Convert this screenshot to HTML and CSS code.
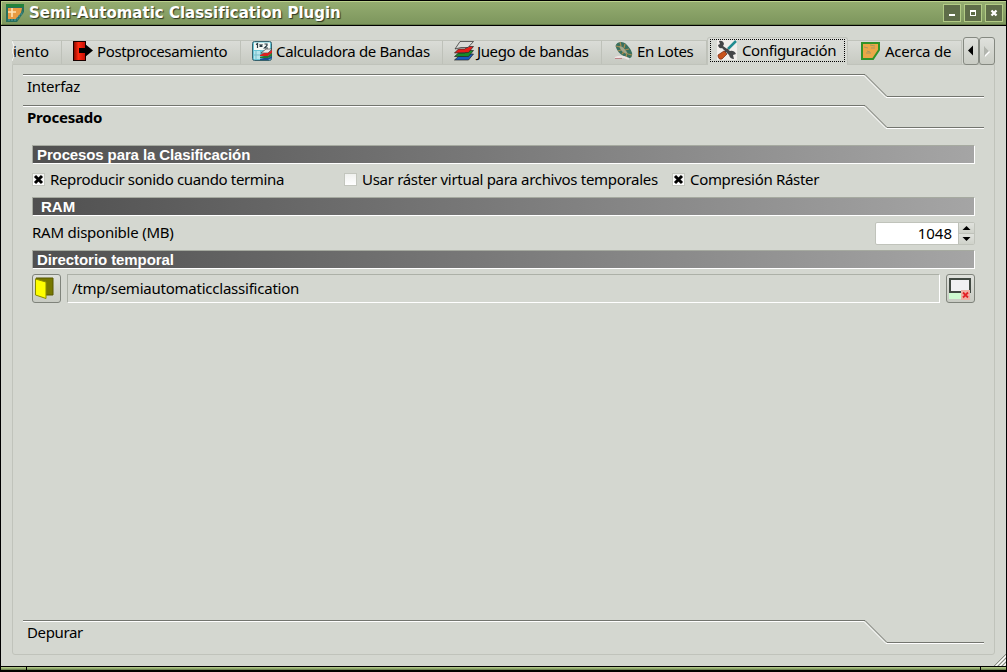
FILE: index.html
```html
<!DOCTYPE html>
<html lang="es">
<head>
<meta charset="utf-8">
<title>Semi-Automatic Classification Plugin</title>
<link rel="stylesheet" href="styles.css">
</head>
<body>
<div class="window">
  <header class="titlebar">
    <svg class="app-icon" width="20" height="20" viewBox="0 0 20 20"><path d="M1 1h18v8l-7 10H1z" fill="#286f5c"/><path d="M1 1h18v3H1z" fill="#23833a"/><path d="M3 5h14l-1 5-5 6H3z" fill="#e99b42"/><path d="M7 5v9M3 9h8" stroke="#ffe3b4" stroke-width="1.6"/><path d="M3 17h8l7-8" fill="none" stroke="#3e8584" stroke-width="2" stroke-dasharray="2 1"/></svg>
    <h1 class="title">Semi-Automatic Classification Plugin</h1>
    <div class="controls">
      <span class="control"><svg width="16" height="16"><path d="M5 9h6v2H5z" fill="#fff"/></svg></span>
      <span class="control"><svg width="16" height="16"><path d="M5 5h6v6H5zM6 7v3h4V7z" fill="#fff" fill-rule="evenodd"/></svg></span>
      <span class="control"><svg width="16" height="16"><path d="M5.500 5.500l5 5M10.500 5.500l-5 5" stroke="#fff" stroke-width="2.300"/></svg></span>
    </div>
  </header>
  <main class="content">
    <nav class="tabs">
      <div class="tab tab-cut"><svg class="tear" width="3" height="22"><path d="M0 0l2 5-2 5 2 5-2 5" fill="none" stroke="#f4f5f2"/></svg><span class="t-iento">iento</span></div>
      <div class="tab tab-post">
        <svg width="20" height="20"><defs><linearGradient id="red"><stop offset="0" stop-color="#8d0900"/><stop offset=".4" stop-color="#ff2a10"/><stop offset="1" stop-color="#c60f05"/></linearGradient></defs><path d="M0 0h13v20H0z" fill="#180000"/><path d="M1 1h11v18H1z" fill="url(#red)"/><path d="M6 7h6V3l8 6.500-8 6.500v-4H6z" fill="#000"/></svg>
        <span class="t-post">Postprocesamiento</span>
      </div>
      <div class="tab tab-calc">
        <svg width="20" height="20"><rect x=".5" y=".5" width="19" height="19" rx="2" fill="#68c5d6" stroke="#37616c"/><path d="M2 1.500h16V9H2z" fill="#f4f8f5"/><path d="M4 3.500l1.500-1V7M7.500 3.500l3 2M10.500 3.500l-3 2M12.500 3h2.500v1.500l-2.500 2.500h3.500" fill="none" stroke="#293b43" stroke-width="1.200"/><path d="M2 10h6v8H2z" fill="#b6e6ec"/><path d="M4 10v8M2 14h6" stroke="#75bdca"/><path d="M9 12l5-4h6l-4 4z" fill="#e8e8e8" stroke="#333" stroke-width=".6"/><path d="M8 14l4-2h4l4-3v3l-4 3H8z" fill="#d92120"/><path d="M8 16l4-1h4l4-3v3l-4 2H8z" fill="#247a31"/><path d="M8 18l4-1h4l4-2v2l-4 2H8z" fill="#194c92"/></svg>
        <span class="t-calc">Calculadora de Bandas</span>
      </div>
      <div class="tab tab-bands">
        <svg width="20" height="20" stroke="#252525" stroke-width=".7"><path d="M.5 19l4-3.500h6l4-2.500h5l-5 6z" fill="#1859bc"/><path d="M.5 15.500l4-3.500h6l4-2.500h5l-5 6z" fill="#168b28"/><path d="M.5 12l4-4h6l4-2.500h5l-5 6z" fill="#e51c18"/><path d="M1 8l5-7.500h13.500L14 6.500H7z" fill="#d9dad7"/></svg>
        <span class="t-bands">Juego de bandas</span>
      </div>
      <div class="tab tab-lots">
        <svg width="20" height="20"><path d="M1.500 5q1-4 6-4 4 0 8 6 4 5 2 9-3 3-8-1-6-3-8-10z" fill="#39705f"/><path d="M5 5q4-1 9 8-6 0-9-8z" fill="#a7a68b"/><path d="M2 5l4 1M6 1l1 4M11 3l-1 4M15 8l-4 1M18 14l-4-1M12 16l1-4M8 13l2-2M4 10l3-1" stroke="#a98c4e" stroke-width="1.200"/><path d="M1 17q5-2 9-1l5 2" fill="none" stroke="#eee4e4" stroke-width="2"/><path d="M1 17.500h7" stroke="#bd8589"/></svg>
        <span class="t-lots">En Lotes</span>
      </div>
      <div class="tab active">
        <div class="focus">
          <svg width="20" height="20"><path d="M0 0h20v20H0z" fill="#f2eeeb"/><path d="M19 1l-8 8" stroke="#208c91" stroke-width="2.500"/><path d="M11 9l-5 5" stroke="#74332a" stroke-width="1.500"/><path d="M7 11l3 3-5 5q-4 1-4-4z" fill="#c9531c" stroke="#742711" stroke-width=".7"/><path d="M1 5l2-1-1-3q4-1 5 3l-1 2 7 5q4-1 6 3l-3 1 1 4q-4 0-5-4l-7-7q-3 1-4-3z" fill="#454648"/></svg>
          <span class="t-conf">Configuración</span>
        </div>
      </div>
      <div class="tab tab-about">
        <svg width="20" height="20"><path d="M1 2h17v7l-6 9H1z" fill="#eba747" stroke="#319329" stroke-width="2"/><path d="M3 6l4 1M9 4l5 1M10 7h4M5 12h5M6 10l3 1" stroke="#a79761"/></svg>
        <span class="t-about">Acerca de</span>
      </div>
      <div class="scrollers">
        <span class="scroller"><svg width="14" height="26"><path d="M4 12.500l5-5v10z" fill="#000"/></svg></span>
        <span class="scroller"><svg width="14" height="26"><path d="M5 9l5 5-5 5z" fill="#fff"/><path d="M4 8l5 5-5 5z" fill="#b2b5ae"/></svg></span>
      </div>
    </nav>
    <section class="pane">
      <div class="fold"><svg class="fold-line" width="962" height="25"><path d="M0 1.500h841l22 22h98" fill="none" stroke="#fff"/><path d="M0 .5h842l22 22h97" fill="none" stroke="#73756f"/></svg><span class="t-int">Interfaz</span></div>
      <div class="fold"><svg class="fold-line" width="962" height="25"><path d="M0 1.500h841l22 22h98" fill="none" stroke="#fff"/><path d="M0 .5h842l22 22h97" fill="none" stroke="#73756f"/></svg><span class="t-proc">Procesado</span></div>
      <div class="settings">
        <h2 class="bar"><span class="t-bar1">Procesos para la Clasificación</span></h2>
        <div class="checks">
          <label class="check check-sound"><i class="box"><svg width="11" height="11"><path d="M2 2l7 7M9 2L2 9" stroke="#000" stroke-width="3"/></svg></i><span class="t-sound">Reproducir sonido cuando termina</span></label>
          <label class="check check-virtual"><i class="box"></i><span class="t-virtual">Usar ráster virtual para archivos temporales</span></label>
          <label class="check"><i class="box"><svg width="11" height="11"><path d="M2 2l7 7M9 2L2 9" stroke="#000" stroke-width="3"/></svg></i><span class="t-comp">Compresión Ráster</span></label>
        </div>
        <h2 class="bar bar-ram"><span>RAM</span></h2>
        <div class="ram">
          <span class="t-ram">RAM disponible (MB)</span>
          <div class="spin"><span class="value">1048</span><span class="steps"><i><svg width="15" height="11"><path d="M3.500 7l4-4 4 4z"/></svg></i><i><svg width="15" height="11"><path d="M3.500 3l4 4 4-4z"/></svg></i></span></div>
        </div>
        <h2 class="bar"><span class="t-bar3">Directorio temporal</span></h2>
        <div class="dir">
          <span class="button"><svg width="27" height="27"><path d="M3 3h17v17H9z" fill="#777800" stroke="#595900"/><path d="M2.500 4L13 7v16.500L2.500 20z" fill="#ff0" stroke="#8b8b00"/></svg></span>
          <div class="path"><span class="t-path">/tmp/semiautomaticclassification</span></div>
          <span class="button"><svg width="27" height="27"><path d="M2 18h12v6H2z" fill="#cefbd1"/><path d="M3 4h20v13H3z" fill="#f1f1f3" stroke="#414942" stroke-width="2"/><path d="M14 15h9v10h-9z" fill="#efb0a3"/><path d="M16 17.500l5 5M21 17.500l-5 5" stroke="#e32326" stroke-width="1.800"/></svg></span>
        </div>
      </div>
      <div class="fold fold-last"><svg class="fold-line" width="962" height="25"><path d="M0 1.500h841l22 22h98" fill="none" stroke="#fff"/><path d="M0 .5h842l22 22h97" fill="none" stroke="#73756f"/></svg><span class="t-dep">Depurar</span></div>
    </section>
    <svg class="grip" width="13" height="13"><path d="M1 13L13 1M5 13l8-8M9 13l4-4" stroke="#888c83"/><path d="M3 13L13 3M7 13l6-6M11 13l2-2" stroke="#fff"/></svg>
  </main>
  <footer class="frame"><span></span><span></span><span></span></footer>
</div>
</body>
</html>
```
FILE: styles.css
```css
* { box-sizing: border-box; }
body { margin: 0; background: #000; }
svg { display: block; flex: none; }
h1, h2 { margin: 0; }
.window { width: 1007px; height: 672px; background: #000; padding: 1px; display: flex; flex-direction: column; font: 15px/20px "Noto Sans", sans-serif; color: #000; white-space: nowrap; overflow: hidden; }
.titlebar { height: 24px; display: flex; align-items: center; padding: 0 3px 0 3px; background: linear-gradient(#94ac70, #7d965d); border-top: 1px solid #bbd18d; border-left: 1px solid #bbd18d; border-bottom: 1px solid #637a46; }
.title { margin-left: 4px; font: bold 15px/22px "DejaVu Sans", sans-serif; color: #fff; text-shadow: 1px 1px 1px #2c3521; }
.controls { margin-left: auto; display: flex; gap: 3px; }
.control { width: 18px; height: 18px; border: 1px solid #b2cb85; background: #5f6d49; }
.content { position: relative; margin-top: 1px; height: 641px; background: #d4d7d0; padding: 11px 11px 0; display: flex; flex-direction: column; }
.tabs { height: 28px; display: flex; align-items: flex-start; position: relative; }
.tab { height: 24px; margin-top: 3px; padding-bottom: 3px; display: flex; align-items: center; gap: 4px; border-top: 1px solid #c0c3bb; border-right: 1px solid #bec1b9; background: linear-gradient(#dadcd7, #c7cac2); }
.tab-cut { width: 50px; padding-left: 1px; position: relative; }
.tear { position: absolute; left: 0; top: 0; }
.tab-post { width: 179px; padding-left: 11px; }
.tab-calc { width: 202px; padding-left: 11px; }
.tab-bands { width: 159px; padding-left: 11px; gap: 3px; }
.tab-lots { width: 105px; padding-left: 12px; gap: 3px; }
.tab-about { width: 114px; padding-left: 13px; }
.active { width: 141px; height: 28px; margin-top: 0; border: 1px solid #c0c3bb; border-bottom: 0; border-radius: 3px 3px 0 0; background: linear-gradient(#dadcd7, #d4d7d0); }
.focus { margin: 1px 0 0 2px; width: 135px; height: 23px; border: 1px dotted #000; display: flex; align-items: center; gap: 5px; padding: 0 0 1px 6px; }
.scrollers { display: flex; margin-left: 1px; position: relative; }
.scroller { width: 16px; height: 28px; border: 1px solid #858981; border-radius: 3px; background: linear-gradient(#dfe1dc, #c9ccc4); }
.pane { height: 591px; width: 983px; margin-top: -1px; border: 1px solid #c0c3bb; border-radius: 0 0 3px 3px; padding: 9px 0 0 10px; display: flex; flex-direction: column; }
.fold { height: 31px; position: relative; padding: 2px 0 0 4px; flex: none; }
.fold-line { position: absolute; left: 0; top: 0; }
.settings { height: 484px; padding: 9px 19px 0 9px; }
.bar { width: 943px; height: 19px; padding-left: 4px; border: 1px solid; border-color: #a6aaa0 #fff #fff #a6aaa0; background: linear-gradient(90deg, #505050, #a5a5a5); color: #fff; font: bold 15px/18px "Liberation Sans", sans-serif; }
.bar-ram { padding-left: 8px; }
.checks { height: 33px; display: flex; align-items: center; padding-bottom: 2px; }
.check { display: flex; align-items: center; gap: 5px; }
.check span { margin-top: -1px; }
.check-sound { width: 312px; }
.check-virtual { width: 328px; }
.box { width: 13px; height: 13px; border: 1px solid #c3c6be; background: linear-gradient(#f0f1ef, #fff); }
.ram { height: 34px; width: 943px; display: flex; align-items: center; justify-content: space-between; }
.spin { display: flex; width: 100px; height: 23px; border: 1px solid #c0c3bb; border-radius: 2px; background: #fff; }
.value { width: 82px; text-align: right; padding-right: 6px; line-height: 20px; }
.steps { width: 16px; display: flex; flex-direction: column; gap: 1px; background: #bec1b9; border-left: 1px solid #bec1b9; }
.steps i { height: 10px; background: linear-gradient(#e0e2dd, #cfd2ca); }
.dir { width: 943px; margin-top: 5px; display: flex; }
.button { width: 29px; height: 29px; border: 1px solid #7f837b; border-radius: 3px; background: linear-gradient(#dfe1dc, #c8cbc3); }
.path { width: 873px; height: 29px; margin: 0 6px; border: 1px solid; border-color: #acb0a7 #fff #fff #acb0a7; padding-left: 4px; line-height: 27px; }
.grip { position: absolute; right: 0; bottom: 0; }
.frame { height: 4px; margin-top: 1px; display: flex; gap: 1px; }
.frame span { flex: 1; height: 3px; background: linear-gradient(#bbd18d, #8ba56a 60%, #5c7043); }
.frame span:first-child, .frame span:last-child { flex: 0 0 25px; }

/* Text tracking */
.t-post { letter-spacing: -.36px; }
.t-calc { letter-spacing: -.34px; }
.t-bands { letter-spacing: -.38px; }
.t-lots { letter-spacing: -.4px; }
.t-conf { letter-spacing: -.38px; }
.t-about { letter-spacing: -.25px; }
.t-sound { letter-spacing: -.35px; }
.t-virtual { letter-spacing: -.3px; }
.t-comp { letter-spacing: -.32px; }
.t-ram { letter-spacing: -.23px; margin-top: -2px; }
.t-path { letter-spacing: -.23px; }
.t-int { letter-spacing: -.25px; }
.t-proc { letter-spacing: -.22px; font-weight: bold; }
.t-dep { letter-spacing: -.38px; }
.t-bar1 { letter-spacing: -.12px; }
.t-bar3 { letter-spacing: -.08px; }
```
